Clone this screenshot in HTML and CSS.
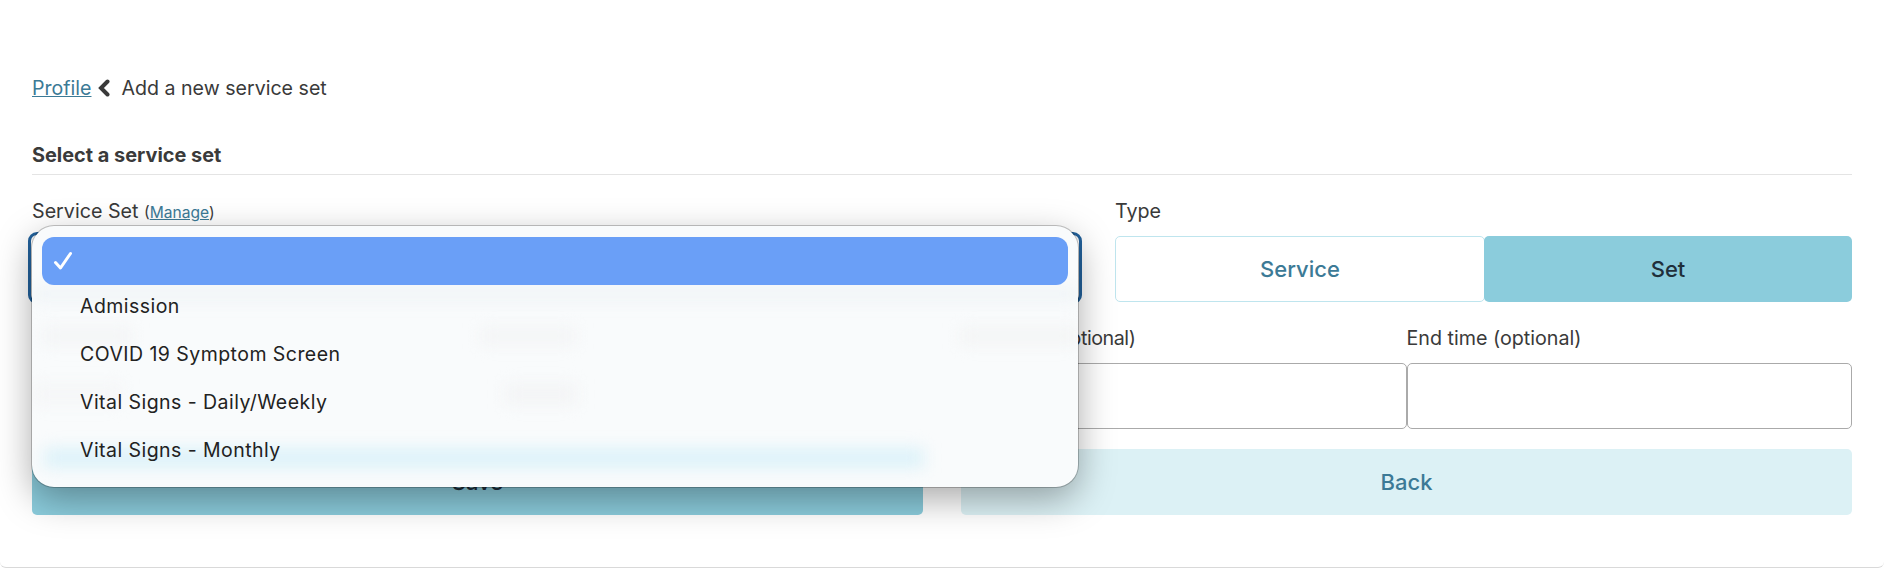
FILE: index.html
```html
<!DOCTYPE html>
<html lang="en">
<head>
<meta charset="utf-8">
<title>Add a new service set</title>
<link rel="stylesheet" href="styles.css">
</head>
<body>
<main class="card">
  <nav class="crumbs">
    <a href="#" class="link">Profile</a>
    <svg class="chev" viewBox="0 0 14 18" width="14" height="18"><path d="M10.5 2.5 4 9l6.500 6.500" fill="none" stroke="#3a3a3a" stroke-width="4" stroke-linecap="round" stroke-linejoin="miter"/></svg>
    <span>Add a new service set</span>
  </nav>
  <h2 class="section-title">Select a service set</h2>

  <div class="row-top">
    <div class="field">
      <label class="label">Service Set <small class="manage">(<a href="#" class="link">Manage</a>)</small></label>
      <div class="select-wrap">
        <div class="select"></div>
        <div class="popup">
          <i class="blob blob-bleed"></i>
          <i class="blob blob-l1"></i>
          <i class="blob blob-l2"></i>
          <i class="blob blob-l3"></i>
          <i class="blob blob-v1"></i>
          <i class="blob blob-v2"></i>
          <i class="blob blob-band"></i>
          <ul class="options">
            <li class="option selected">
              <svg class="check" viewBox="0 0 20 20" width="20" height="20"><path d="M2.500 11.500 7.500 17 17.500 2.500" fill="none" stroke="#fff" stroke-width="3" stroke-linecap="round" stroke-linejoin="round"/></svg>
            </li>
            <li class="option">Admission</li>
            <li class="option">COVID 19 Symptom Screen</li>
            <li class="option">Vital Signs - Daily/Weekly</li>
            <li class="option">Vital Signs - Monthly</li>
          </ul>
        </div>
      </div>
    </div>
    <div class="field">
      <label class="label">Type</label>
      <div class="toggle">
        <button class="btn btn-outline">Service</button>
        <button class="btn btn-solid">Set</button>
      </div>
    </div>
  </div>

  <div class="row-halves">
    <div class="pair">
      <div class="field"><div class="label"></div><div class="input"></div></div>
      <div class="field"><div class="label"></div><div class="input"></div></div>
    </div>
    <div class="pair">
      <div class="field"><label class="label label-tight">Start time (optional)</label><div class="input"></div></div>
      <div class="field"><label class="label">End time (optional)</label><div class="input"></div></div>
    </div>
  </div>

  <div class="row-halves row-actions">
    <button class="btn btn-solid">Save</button>
    <button class="btn btn-soft">Back</button>
  </div>
</main>
</body>
</html>
```
FILE: styles.css
```css
* { box-sizing: border-box; }
html, body { margin: 0; padding: 0; background: #fff; }
body { font-family: Inter, "Liberation Sans", sans-serif; color: #3a3a3a; overflow: hidden; }
.card {
  height: 567.500px;
  padding: 74px 32px 0;
  border-bottom: 1.500px solid #d9d9d9;
  border-radius: 0 0 6px 6px;
}
.crumbs { display: flex; align-items: center; height: 28px; font-size: 19.600px; }
.chev { margin: 0 10px 0 6px; }
.link { color: #3c7a96; text-decoration: underline; }
.section-title {
  margin: 40px 0 0;
  padding: 0 0 6px;
  height: 33px;
  font-size: 19.900px;
  line-height: 26px;
  font-weight: 700;
  border-bottom: 1px solid #e4e4e4;
}
.row-top { display: grid; grid-template-columns: 1046px 1fr; column-gap: 37px; margin-top: 24px; }
.label { display: block; height: 24px; line-height: 24px; font-size: 19.700px; margin-bottom: 13px; }
.label-tight { letter-spacing: -.45px; }
.manage { font-size: 15.600px; color: #3a3a3a; }
.select-wrap { position: relative; height: 66px; }
.select { height: 64px; border-radius: 5px; outline: 3px solid #22619b; outline-offset: 1px; background: #fff; }
.popup {
  position: absolute;
  top: -10px;
  left: 0;
  width: 1046px;
  height: 261px;
  overflow: hidden;
  border-radius: 22px;
  background: #f9fbfc;
  box-shadow: 0 0 0 1px rgba(0,0,0,.22), 0 12px 36px rgba(0,0,0,.34);
  z-index: 5;
}
.blob { position: absolute; display: block; filter: blur(8px); }
.blob-bleed { left: 0; right: 0; top: 62px; height: 12px; background: #eef3f6; }
.blob-l1 { left: 10px; top: 102px; width: 90px; height: 16px; background: #f3f4f5; }
.blob-l2 { left: 448px; top: 102px; width: 96px; height: 16px; background: #f3f4f5; }
.blob-l3 { left: 928px; top: 102px; width: 118px; height: 16px; background: #f3f4f4; }
.blob-v1 { left: 0; top: 158px; width: 90px; height: 20px; background: #f5f6f7; }
.blob-v2 { left: 473px; top: 158px; width: 72px; height: 20px; background: #f3f4f5; }
.blob-band { left: 12px; top: 222px; width: 880px; height: 20px; background: #dcf2f9; }
.options { position: relative; list-style: none; margin: 0; padding: 11px 10px 0; }
.option {
  display: flex;
  align-items: center;
  height: 48px;
  padding-left: 38px;
  padding-bottom: 7px;
  font-size: 19.500px;
  letter-spacing: .45px;
  color: #222;
}
.option.selected { position: relative; background: #6a9ff7; border-radius: 12px; padding: 0 0 0 11px; }
.check { display: block; }
.toggle { display: flex; }
.btn {
  display: block;
  width: 100%;
  height: 66px;
  border: 0;
  border-radius: 5px;
  font-family: inherit;
  font-size: 22px;
  font-weight: 500;
  padding: 0;
}
.toggle .btn { flex: 1 1 0; }
.btn-outline { background: #fff; border: 1px solid #bfe5ee; color: #3c7a96; margin-right: -1px; }
.btn-solid { background: #8bccdc; color: #1f2f3a; }
.btn-soft { background: #dcf1f5; color: #3c7a96; }
.row-halves { display: grid; grid-template-columns: 1fr 1fr; column-gap: 38px; margin-top: 24px; }
.pair { display: grid; grid-template-columns: 1fr 1fr; }
.input { height: 66px; border: 1px solid #aaa; border-radius: 5px; background: #fff; }
.row-actions { margin-top: 20px; }
```
